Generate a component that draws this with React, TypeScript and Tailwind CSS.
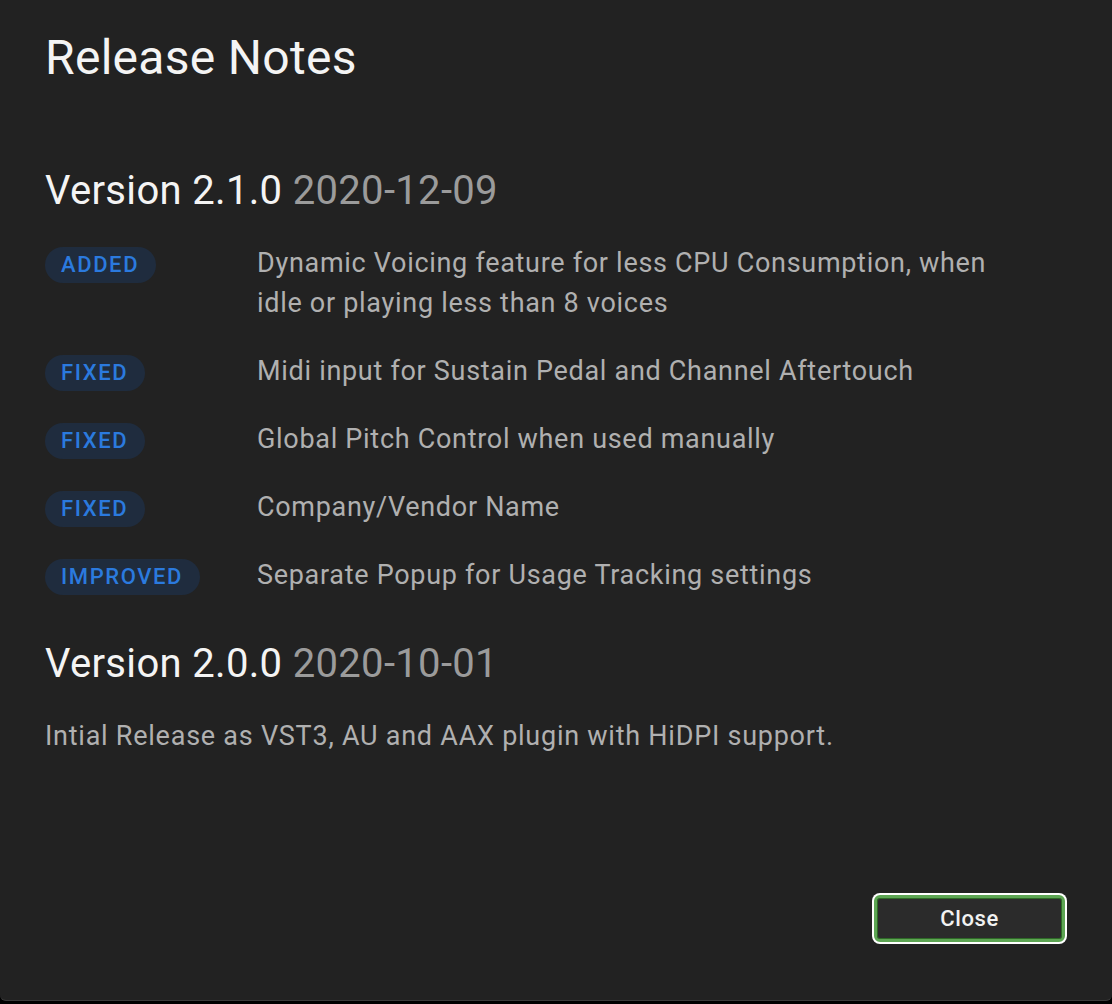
import React from 'react';

type Change = { tag: 'ADDED' | 'FIXED' | 'IMPROVED'; text: string };

const changes: Change[] = [
  { tag: 'ADDED', text: 'Dynamic Voicing feature for less CPU Consumption, when idle or playing less than 8 voices' },
  { tag: 'FIXED', text: 'Midi input for Sustain Pedal and Channel Aftertouch' },
  { tag: 'FIXED', text: 'Global Pitch Control when used manually' },
  { tag: 'FIXED', text: 'Company/Vendor Name' },
  { tag: 'IMPROVED', text: 'Separate Popup for Usage Tracking settings' },
];

const VersionHeading: React.FC<{ version: string; date: string }> = ({ version, date }) => (
  <h2 className="text-[40px] leading-[48px] font-normal tracking-[0.33px] text-[#f4f4f4]">
    Version {version} <span className="text-[#9b9b9b]">{date}</span>
  </h2>
);

const App: React.FC = () => {
  return (
    <div className="w-[1112px] h-[1004px] bg-black font-['Roboto',sans-serif]">
      <div className="h-[1001px] bg-[#222222] rounded-b-[6px] border-b border-[#3b3b3b] flex flex-col pl-[45px] pr-[45px] pt-[30px] pb-[56px]">
        <h1 className="text-[48px] leading-[56px] font-normal tracking-[0.3px] text-[#f4f4f4]">Release Notes</h1>

        {/* 2.1.0 */}
        <div className="mt-[81px]">
          <VersionHeading version="2.1.0" date="2020-12-09" />
          <div className="mt-[28px] flex flex-col gap-[28px]">
            {changes.map((c, i) => (
              <div key={i} className="flex items-start">
                <div className="w-[212px] shrink-0">
                  <span className="inline-block mt-[4px] h-[36px] pl-[16px] pr-[17px] rounded-full bg-[#1f2c3e] text-[#2b7ade] text-[22px] leading-[36px] font-medium tracking-[1.6px]">
                    {c.tag}
                  </span>
                </div>
                <p className="w-[760px] text-[27px] leading-[40px] tracking-[0.7px] text-[#b0b0b0]">{c.text}</p>
              </div>
            ))}
          </div>
        </div>

        {/* 2.0.0 */}
        <div className="mt-[45px]">
          <VersionHeading version="2.0.0" date="2020-10-01" />
          <p className="mt-[28px] text-[27px] leading-[40px] tracking-[0.75px] text-[#b0b0b0]">
            Intial Release as VST3, AU and AAX plugin with HiDPI support.
          </p>
        </div>

        <div className="mt-auto flex justify-end">
          <button className="w-[195px] h-[51px] rounded-[8px] bg-white p-[2px]">
            <span className="flex items-center justify-center w-full h-full rounded-[6px] border-[3px] border-[#5da553] bg-[#2b2b2b] shadow-[inset_0_0_0_1px_#2e6a27] text-[22px] font-medium tracking-[0.6px] text-[#f2f2f2]">
              Close
            </span>
          </button>
        </div>
      </div>
    </div>
  );
};

export default App;
